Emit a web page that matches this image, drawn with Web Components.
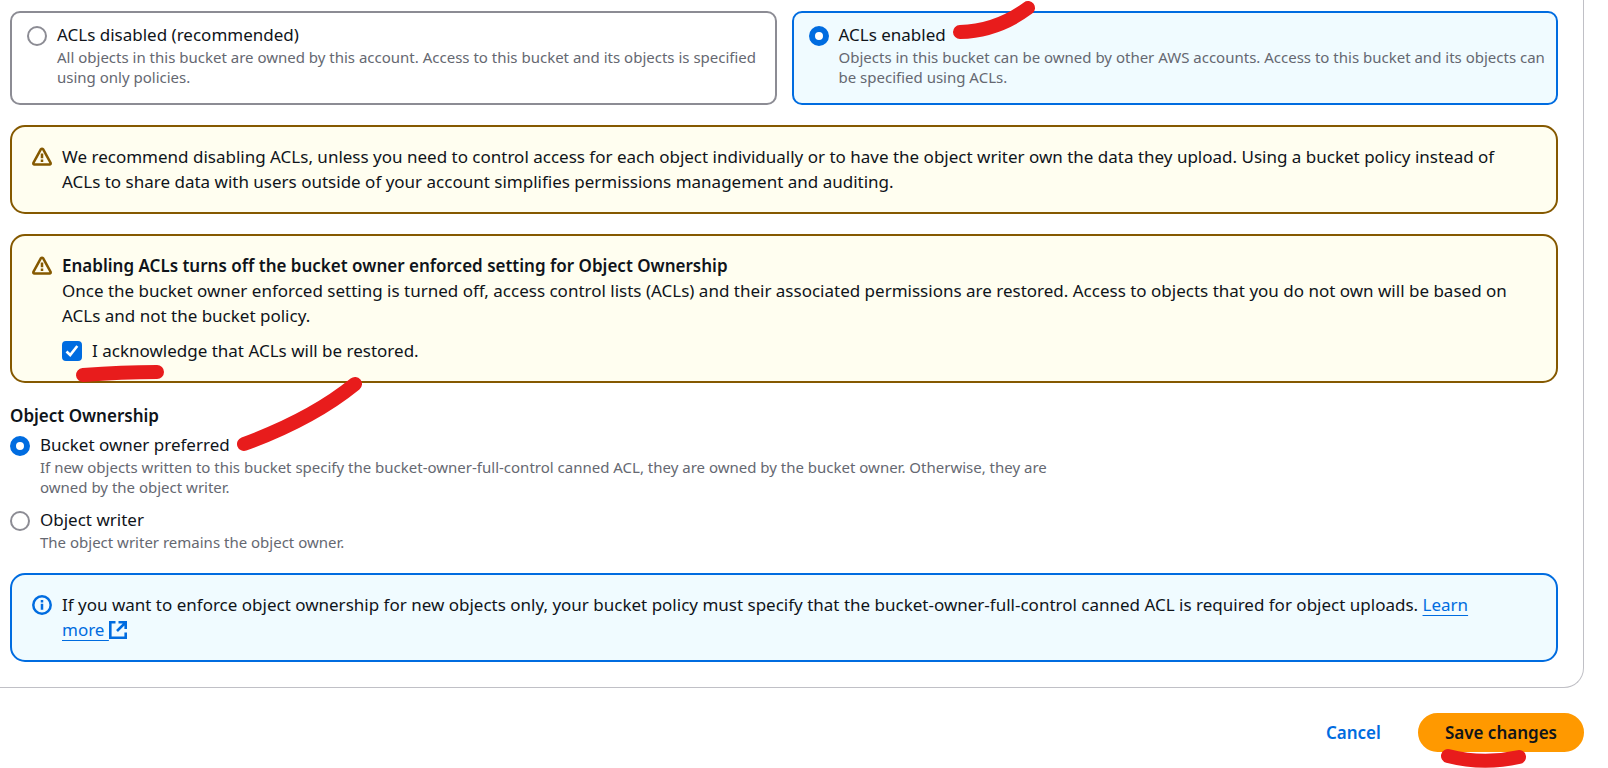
<!DOCTYPE html>
<html lang="en">
<head>
<meta charset="utf-8">
<title>Edit Object Ownership</title>
<style>
  body { margin: 0; background: #fff; }
</style>
</head>
<body>
<ownership-page></ownership-page>

<template id="tpl-page">
  <style>
    :host {
      display: block;
      overflow: hidden;
      padding-right: 24px;
      color: #0f141a;
      font: 17px/25px "Noto Sans", "Open Sans", sans-serif;
      --blue: #006ce0;
      --muted: #656871;
    }
    section {
      display: flex;
      flex-direction: column;
      gap: 20px;
      padding: 11px 25px 25px 10px;
      border: solid #c0c0c6;
      border-width: 0 1px 1px 0;
      border-bottom-right-radius: 20px;
    }
    .tiles { display: grid; grid-template-columns: 1fr 1fr; gap: 15px; }
    .group { display: flex; flex-direction: column; padding-bottom: 1px; }
    h3 { margin: 0 0 4px; font: inherit; font-weight: 600; }
    strong { font-weight: 600; }
    .stack { display: flex; flex-direction: column; gap: 10px; }
    p { margin: 0; }
    a { color: var(--blue); text-decoration: underline 1px; text-underline-offset: 4px; }
    a svg { width: 18px; height: 18px; vertical-align: -3px; }
    footer { display: flex; justify-content: flex-end; gap: 10px; padding: 25px 0 16px; }
  </style>
  <section>
    <choice-group class="tiles" aria-label="Access control lists">
      <radio-choice tile name="acl">
        ACLs disabled (recommended)
        <span slot="description">All objects in this bucket are owned by this account. Access to this bucket and its objects is specified using only policies.</span>
      </radio-choice>
      <radio-choice tile name="acl" checked>
        ACLs enabled<ink-mark shape="tick"></ink-mark>
        <span slot="description">Objects in this bucket can be owned by other AWS accounts. Access to this bucket and its objects can be specified using ACLs.</span>
      </radio-choice>
    </choice-group>
    <alert-box type="warning">
      <p>We recommend disabling ACLs, unless you need to control access for each object individually or to have the object writer own the data they upload. Using a bucket policy instead of ACLs to share data with users outside of your account simplifies permissions management and auditing.</p>
    </alert-box>
    <alert-box type="warning">
      <strong slot="header">Enabling ACLs turns off the bucket owner enforced setting for Object Ownership</strong>
      <p>Once the bucket owner enforced setting is turned off, access control lists (ACLs) and their associated permissions are restored. Access to objects that you do not own will be based on ACLs and not the bucket policy.</p>
      <check-choice slot="action" checked><ink-mark shape="underline"></ink-mark>I acknowledge that ACLs will be restored.</check-choice>
    </alert-box>
    <div class="group">
      <h3 id="ownership">Object Ownership</h3>
      <choice-group class="stack" aria-labelledby="ownership">
        <radio-choice name="owner" checked>
          Bucket owner preferred<ink-mark shape="swoosh"></ink-mark>
          <span slot="description">If new objects written to this bucket specify the bucket-owner-full-control canned ACL, they are owned by the bucket owner. Otherwise, they are owned by the object writer.</span>
        </radio-choice>
        <radio-choice name="owner">
          Object writer
          <span slot="description">The object writer remains the object owner.</span>
        </radio-choice>
      </choice-group>
    </div>
    <alert-box type="info">
      <p>If you want to enforce object ownership for new objects only, your bucket policy must specify that the bucket-owner-full-control canned ACL is required for object uploads. <a href="#learn-more">Learn more <svg viewBox="0 0 18 18" fill="none" stroke="currentColor" stroke-width="2.6" role="img" aria-label="Opens in a new tab"><path d="M6.5 1.3H1.3v15.4h15.4v-5.2M9.5 1.3h7.2V8M16.7 1.3 8 10"/></svg></a></p>
    </alert-box>
  </section>
  <footer>
    <action-button>Cancel</action-button>
    <action-button primary>Save changes<ink-mark shape="smile"></ink-mark></action-button>
  </footer>
</template>

<template id="tpl-group">
  <style>:host { display: block; }</style>
  <slot></slot>
</template>

<template id="tpl-radio">
  <style>
    :host { display: block; }
    :host([tile]) {
      box-sizing: border-box;
      padding: 9px 10px 16px 15px;
      border: 2px solid #8c8c94;
      border-radius: 10px;
    }
    :host([tile][checked]) { border-color: var(--blue); background: #f0fbff; }
    label { display: grid; grid-template-columns: 20px 1fr; column-gap: 10px; }
    input {
      appearance: none;
      box-sizing: border-box;
      width: 20px;
      height: 20px;
      margin: 4px 0 0;
      border: 2px solid #8c8c94;
      border-radius: 50%;
      background: #fff;
    }
    input:checked { border: 6px solid var(--blue); }
    .text { position: relative; }
    .desc {
      display: block;
      max-width: 1020px;
      color: var(--muted);
      font-size: 15px;
      line-height: 20px;
    }
  </style>
  <label>
    <input type="radio">
    <span class="text"><slot></slot><span class="desc"><slot name="description"></slot></span></span>
  </label>
</template>

<template id="tpl-check">
  <style>
    :host { display: block; }
    label { display: grid; grid-template-columns: 20px 1fr; column-gap: 10px; }
    input, svg { grid-area: 1 / 1; width: 20px; height: 20px; margin: 3px 0 0; }
    input {
      appearance: none;
      box-sizing: border-box;
      border: 2px solid #8c8c94;
      border-radius: 4px;
      background: #fff;
    }
    input:checked { border-color: var(--blue); background: var(--blue); }
    svg { z-index: 1; pointer-events: none; fill: none; stroke: #fff; stroke-width: 2.6; }
    input:not(:checked) + svg { display: none; }
    span { position: relative; }
  </style>
  <label>
    <input type="checkbox">
    <svg viewBox="0 0 20 20" aria-hidden="true"><path d="M4.5 10.5 8.2 14 15.3 5"/></svg>
    <span><slot></slot></span>
  </label>
</template>

<template id="tpl-alert">
  <style>
    :host {
      display: grid;
      grid-template-columns: 20px 1fr;
      column-gap: 10px;
      padding: 17px 45px 18px 20px;
      border: 2px solid #855900;
      border-radius: 15px;
      background: #fffef0;
      color: #0f141a;
    }
    :host([type="info"]) { border-color: var(--blue); background: #f0fbff; }
    svg { width: 20px; height: 20px; margin-top: 3px; fill: none; stroke: #855900; stroke-width: 2.5; }
    :host([type="info"]) svg { stroke: var(--blue); }
    :host([type="info"]) .warn, :host([type="warning"]) .info { display: none; }
    slot { display: block; }
    slot[name="action"]::slotted(*) { margin-top: 10px; }
  </style>
  <svg class="warn" viewBox="0 0 20 20" aria-hidden="true"><path stroke-linejoin="round" d="M8.8 2.4 1.4 15.8Q1 17.4 2.4 17.4H17.6Q19 17.4 18.6 15.8L11.2 2.4Q10 1 8.8 2.4Z"/><path d="M10 6.5v4.8M10 12.6v2.4"/></svg>
  <svg class="info" viewBox="0 0 20 20" aria-hidden="true"><circle cx="10" cy="10" r="8.7"/><path d="M10 8.8v6M10 5v2.4"/></svg>
  <div><slot name="header"></slot><slot></slot><slot name="action"></slot></div>
</template>

<template id="tpl-button">
  <style>
    :host { display: block; }
    button {
      position: relative;
      padding: 5px 25px;
      border: 2px solid transparent;
      border-radius: 20px;
      background: transparent;
      color: var(--blue);
      font: inherit;
      font-weight: 600;
      cursor: pointer;
    }
    :host([primary]) button { border-color: #f90; background: #f90; color: #0f141a; }
  </style>
  <button type="button"><slot></slot></button>
</template>

<template id="tpl-ink">
  <style>
    :host { position: absolute; top: 0; left: 0; z-index: 2; pointer-events: none; }
    svg { display: block; overflow: visible; width: 1px; height: 1px; fill: none; stroke: #e81c1c; stroke-width: 14; stroke-linecap: round; }
  </style>
  <svg aria-hidden="true"><path/></svg>
</template>

<script>
  const attach = (el, id) => {
    const root = el.attachShadow({ mode: "open" });
    root.append(document.getElementById(id).content.cloneNode(true));
    return root;
  };

  // Freehand strokes, in pixels from the top left of the label that holds them.
  const INK = {
    tick: "M121 10Q158 9 189 -14",
    underline: "M-9 37Q30 34 65 34",
    swoosh: "M204 12Q272 -13 315 -48",
    smile: "M28 41Q63 50 99 42"
  };

  customElements.define("ink-mark", class extends HTMLElement {
    constructor() { super(); this.root = attach(this, "tpl-ink"); }
    connectedCallback() {
      this.root.querySelector("path").setAttribute("d", INK[this.getAttribute("shape")]);
    }
  });

  customElements.define("radio-choice", class extends HTMLElement {
    constructor() { super(); this.input = attach(this, "tpl-radio").querySelector("input"); }
    connectedCallback() {
      this.input.name = this.getAttribute("name");
      this.input.checked = this.hasAttribute("checked");
      this.input.onchange = () => this.dispatchEvent(new CustomEvent("choose", { bubbles: true }));
    }
    set checked(on) { this.toggleAttribute("checked", on); this.input.checked = on; }
  });

  customElements.define("choice-group", class extends HTMLElement {
    constructor() {
      super();
      attach(this, "tpl-group");
      this.addEventListener("choose", e => {
        for (const c of this.querySelectorAll("radio-choice")) c.checked = c === e.target;
      });
    }
    connectedCallback() { this.setAttribute("role", "radiogroup"); }
  });

  customElements.define("check-choice", class extends HTMLElement {
    constructor() { super(); this.input = attach(this, "tpl-check").querySelector("input"); }
    connectedCallback() { this.input.checked = this.hasAttribute("checked"); }
  });

  customElements.define("alert-box", class extends HTMLElement {
    constructor() { super(); attach(this, "tpl-alert"); }
  });

  customElements.define("action-button", class extends HTMLElement {
    constructor() { super(); attach(this, "tpl-button"); }
  });

  customElements.define("ownership-page", class extends HTMLElement {
    constructor() { super(); attach(this, "tpl-page"); }
  });
</script>
</body>
</html>
